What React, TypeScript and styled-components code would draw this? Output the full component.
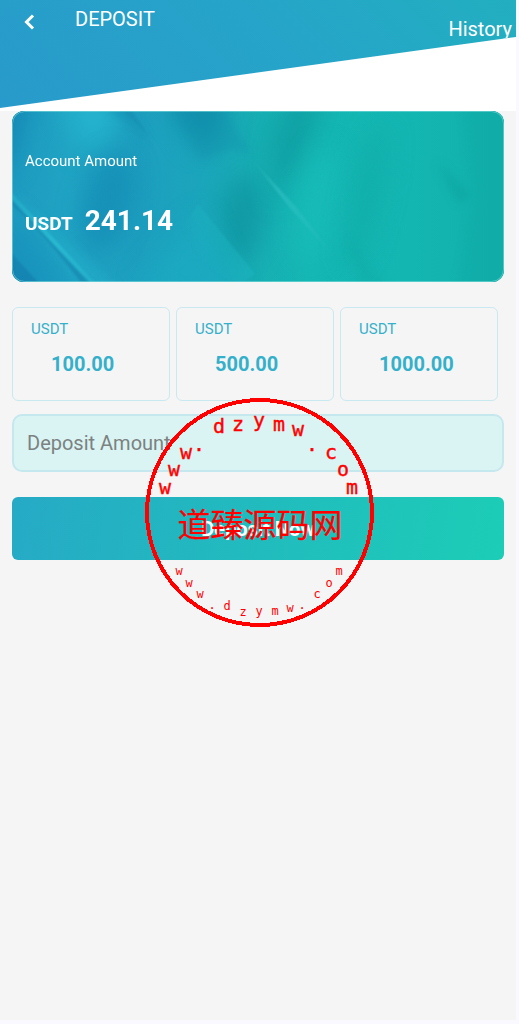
import React from "react";
import styled, { createGlobalStyle } from "styled-components";

const GlobalStyle = createGlobalStyle`
  *, *::before, *::after { box-sizing: border-box; }
  body {
    margin: 0;
    background: #f9f9ff;
    font-family: Roboto, "Noto Sans CJK SC", sans-serif;
  }
  button, input { font-family: inherit; }
`;

const Frame = styled.div`
  position: relative;
  padding: 0 3px 4px 0;
`;

const Page = styled.div`
  min-height: calc(100vh - 4px);
  background: #f5f5f5;
`;

const Header = styled.header`
  height: 111px;
  background: #fff;
`;

const HeaderBand = styled.div`
  display: flex;
  align-items: flex-start;
  height: 108px;
  padding: 7px 4px 0 20px;
  color: #fff;
  background: linear-gradient(45deg, #289acb, #26a4c9 55%, #22afc0);
  clip-path: polygon(0 0, 100% 0, 100% 37px, 0 100%);
`;

const BackButton = styled.button`
  display: flex;
  width: 20px;
  height: 30px;
  padding: 0;
  align-items: center;
  border: 0;
  background: none;
  color: inherit;
  cursor: pointer;
`;

const Title = styled.h1`
  flex: 1;
  margin: 0 0 0 35px;
  font-size: 20px;
  font-weight: 400;
  line-height: 24px;
`;

const HistoryLink = styled.a`
  margin-top: 10px;
  font-size: 20px;
  line-height: 24px;
  color: inherit;
  text-decoration: none;
`;

const Main = styled.main`
  padding: 0 12px;
`;

const BalanceCard = styled.section`
  position: relative;
  height: 171px;
  padding: 40px 13px 0;
  overflow: hidden;
  border-radius: 12px;
  background: #14b0b4;
  color: #fff;
`;

const CardArt = styled.svg`
  position: absolute;
  inset: 0;
  width: 100%;
  height: 100%;
`;

const CardLabel = styled.p`
  position: relative;
  margin: 0;
  font-size: 15px;
  line-height: 20px;
`;

const Balance = styled.p`
  position: relative;
  display: flex;
  align-items: baseline;
  gap: 12px;
  margin: 33px 0 0;
  font-size: 28px;
  font-weight: 700;
  line-height: 34px;
`;

const Currency = styled.span`
  font-size: 19px;
`;

const Presets = styled.div`
  display: grid;
  grid-template-columns: repeat(3, 1fr);
  gap: 6px;
  margin: 25px 6px 0 0;
`;

const PresetButton = styled.button`
  display: flex;
  flex-direction: column;
  align-items: flex-start;
  justify-content: flex-start;
  gap: 13px;
  height: 94px;
  padding: 11px 0 0 18px;
  border: 1px solid #c9e9f0;
  border-radius: 6px;
  background: none;
  color: #35b0cb;
  text-align: left;
  cursor: pointer;
`;

const PresetUnit = styled.span`
  font-size: 15px;
  line-height: 20px;
`;

const PresetValue = styled.span`
  padding-left: 20px;
  font-size: 20px;
  font-weight: 700;
  line-height: 24px;
`;

const AmountInput = styled.input`
  display: block;
  width: 100%;
  height: 58px;
  margin-top: 13px;
  padding: 0 13px;
  border: 2px solid #c5e8ef;
  border-radius: 10px;
  background: #d9f4f3;
  color: #444;
  font-size: 20px;
  &::placeholder { color: #7c8181; opacity: 1; }
`;

const SubmitButton = styled.button`
  display: block;
  width: 100%;
  height: 63px;
  margin-top: 25px;
  padding: 0;
  border: 0;
  border-radius: 6px;
  background: linear-gradient(100deg, #26aac6, #1ccdb6);
  color: #fff;
  font-size: 20px;
  font-weight: 700;
  cursor: pointer;
`;

const StampLayer = styled.div`
  position: absolute;
  top: 398px;
  left: 0;
  right: 0;
  display: flex;
  justify-content: center;
  pointer-events: none;
`;

const StampLetter = styled.text<{ $small?: boolean }>`
  font-family: "DejaVu Sans Mono", monospace;
  font-size: ${(p) => (p.$small ? 12 : 20)}px;
  text-anchor: middle;
  fill: #f00;
  stroke: #f00;
  stroke-width: ${(p) => (p.$small ? 0 : 0.4)};
`;

const StampName = styled.text`
  font-family: "Noto Sans CJK SC", sans-serif;
  font-size: 33px;
  text-anchor: middle;
  fill: #f00;
  stroke: #f00;
  stroke-width: 0.2;
`;

type Letter = [string, number, number];

const upperArc: Letter[] = [
  ["w", 20, 96], ["w", 29, 78], ["w", 41, 61], [".", 54, 53],
  ["d", 74, 35], ["z", 93, 33], ["y", 114, 29], ["m", 134, 33], ["w", 153, 38],
  [".", 167, 53], ["c", 186, 61], ["o", 198, 78], ["m", 207, 96],
];

const lowerArc: Letter[] = [
  ["w", 34, 177], ["w", 44, 189], ["w", 55, 200], [".", 67, 211],
  ["d", 82, 212], ["z", 98, 218], ["y", 114, 217], ["m", 130, 217], ["w", 145, 214],
  [".", 157, 211], ["c", 172, 200], ["o", 184, 189], ["m", 194, 177],
];

const presets = ["100.00", "500.00", "1000.00"];

function CardBackground() {
  return (
    <CardArt viewBox="0 0 492 171" preserveAspectRatio="none" aria-hidden="true">
      <defs>
        <linearGradient id="base" x1="0" y1="0" x2="492" y2="0" gradientUnits="userSpaceOnUse">
          <stop offset="0" stopColor="#1e9bc0" />
          <stop offset="0.12" stopColor="#20a4c4" />
          <stop offset="0.26" stopColor="#1d9fbf" />
          <stop offset="0.38" stopColor="#1ba5bc" />
          <stop offset="0.5" stopColor="#17aeb3" />
          <stop offset="0.6" stopColor="#15b7b4" />
          <stop offset="0.82" stopColor="#14b6b2" />
          <stop offset="1" stopColor="#11aeaa" />
        </linearGradient>
        <linearGradient id="streak" x1="5" y1="95" x2="80" y2="171" gradientUnits="userSpaceOnUse">
          <stop offset="0" stopColor="#2abbd2" stopOpacity="0.5" />
          <stop offset="0.5" stopColor="#2abbd2" stopOpacity="0.9" />
          <stop offset="1" stopColor="#2abbd2" stopOpacity="0.5" />
        </linearGradient>
        <linearGradient id="glint" x1="238" y1="45" x2="330" y2="155" gradientUnits="userSpaceOnUse">
          <stop offset="0" stopColor="#35c4c8" stopOpacity="0" />
          <stop offset="0.3" stopColor="#35c4c8" stopOpacity="0.6" />
          <stop offset="1" stopColor="#35c4c8" stopOpacity="0" />
        </linearGradient>
        <linearGradient id="crease" x1="185" y1="145" x2="218" y2="125" gradientUnits="userSpaceOnUse">
          <stop offset="0" stopColor="#1eb8c4" stopOpacity="0" />
          <stop offset="1" stopColor="#1eb8c4" stopOpacity="0.45" />
        </linearGradient>
        <filter id="soft" x="-100%" y="-100%" width="300%" height="300%" colorInterpolationFilters="sRGB">
          <feGaussianBlur stdDeviation="13" />
        </filter>
        <filter id="medium" x="-50%" y="-50%" width="200%" height="200%" colorInterpolationFilters="sRGB">
          <feGaussianBlur stdDeviation="4" />
        </filter>
        <filter id="fine" x="-50%" y="-50%" width="200%" height="200%" colorInterpolationFilters="sRGB">
          <feGaussianBlur stdDeviation="1" />
        </filter>
      </defs>
      <rect width="492" height="171" fill="url(#base)" />
      <path d="M-20 -20H20L0 50L-20 70Z" fill="#1487b4" filter="url(#soft)" />
      <path d="M50 -20H105L100 30L70 40Z" fill="#24b3ce" filter="url(#soft)" />
      <ellipse cx="95" cy="92" rx="24" ry="52" fill="#148bb4" opacity="0.75" transform="rotate(15 95 92)" filter="url(#soft)" />
      <path d="M150 -20H215L205 35L185 35Z" fill="#108fab" filter="url(#soft)" />
      <ellipse cx="229" cy="108" rx="20" ry="45" fill="#1099a5" transform="rotate(5 229 108)" filter="url(#soft)" />
      <path d="M280 -20H315L290 50L260 95L258 30Z" fill="#109ea3" opacity="0.9" filter="url(#soft)" />
      <path d="M130 165L190 100L230 190H130Z" fill="#1cabc2" opacity="0.7" filter="url(#soft)" />
      <ellipse cx="305" cy="95" rx="22" ry="60" fill="#19bcb9" opacity="0.7" transform="rotate(10 305 95)" filter="url(#soft)" />
      <ellipse cx="355" cy="85" rx="14" ry="75" fill="#10aca9" opacity="0.8" transform="rotate(12 355 85)" filter="url(#soft)" />
      <path d="M-20 120L10 115L70 190H-20Z" fill="#1791bb" opacity="0.7" filter="url(#soft)" />
      <g filter="url(#medium)">
        <path d="M156 -10H205L240 42L215 38L190 50Z" fill="#1090ab" opacity="0.35" />
        <path d="M88 -10H112L136 30Z" fill="#128bb2" opacity="0.5" />
        <path d="M424 50L460 85L446 92Z" fill="#0ba49f" opacity="0.55" />
        <path d="M452 -10H502V181H445L462 90Z" fill="#10aaa5" opacity="0.4" />
        <path d="M335 125L380 181H350Z" fill="#0da5a0" opacity="0.25" />
        <path d="M-5 75L30 105L110 181H75Z" fill="#25b2cc" opacity="0.4" />
      </g>
      <g filter="url(#fine)">
        <path d="M-2 80L84 173H78L-2 87Z" fill="url(#streak)" />
        <path d="M-2 87L40 132L79 173H70Q30 120 -2 92Z" fill="#1279a8" opacity="0.5" />
        <path d="M-2 141L28 173H-2Z" fill="#127cac" opacity="0.6" />
        <path d="M110 -2H118L137 25Z" fill="#1283aa" opacity="0.35" />
        <path d="M186 93L243 163L225 175L160 130Z" fill="url(#crease)" />
        <path d="M237 45L285 97L330 155L278 97Z" fill="url(#glint)" />
      </g>
      <rect
        x="0.5" y="0.5" width="491" height="170" rx="12"
        fill="none" stroke="#8be0df" strokeOpacity="0.55"
      />
    </CardArt>
  );
}

function Stamp() {
  return (
    <StampLayer aria-hidden="true">
      <svg width="229" height="229" viewBox="0 0 229 229">
        <circle
          cx="114.5" cy="114.5" r="112.5"
          fill="none" stroke="#f00" strokeWidth="4" shapeRendering="crispEdges"
        />
        {upperArc.map(([ch, x, y], i) => (
          <StampLetter key={i} x={x} y={y}>{ch}</StampLetter>
        ))}
        <StampName x="115" y="139">道臻源码网</StampName>
        {lowerArc.map(([ch, x, y], i) => (
          <StampLetter key={i} x={x} y={y} $small>{ch}</StampLetter>
        ))}
      </svg>
    </StampLayer>
  );
}

export default function App() {
  return (
    <Frame>
      <GlobalStyle />
      <Page>
        <Header>
          <HeaderBand>
            <BackButton type="button" aria-label="Back">
              <svg width="20" height="30" viewBox="0 0 20 30" fill="none">
                <path d="M13 8.5L6.5 15L13 21.5" stroke="#fff" strokeWidth="3" />
              </svg>
            </BackButton>
            <Title>DEPOSIT</Title>
            <HistoryLink href="#history">History</HistoryLink>
          </HeaderBand>
        </Header>
        <Main>
          <BalanceCard>
            <CardBackground />
            <CardLabel>Account Amount</CardLabel>
            <Balance>
              <Currency>USDT</Currency>
              <span>241.14</span>
            </Balance>
          </BalanceCard>
          <Presets>
            {presets.map((value) => (
              <PresetButton key={value} type="button">
                <PresetUnit>USDT</PresetUnit>
                <PresetValue>{value}</PresetValue>
              </PresetButton>
            ))}
          </Presets>
          <AmountInput type="text" inputMode="decimal" aria-label="Deposit Amount" placeholder="Deposit Amount" />
          <SubmitButton type="button">Deposit Now</SubmitButton>
        </Main>
      </Page>
      <Stamp />
    </Frame>
  );
}
